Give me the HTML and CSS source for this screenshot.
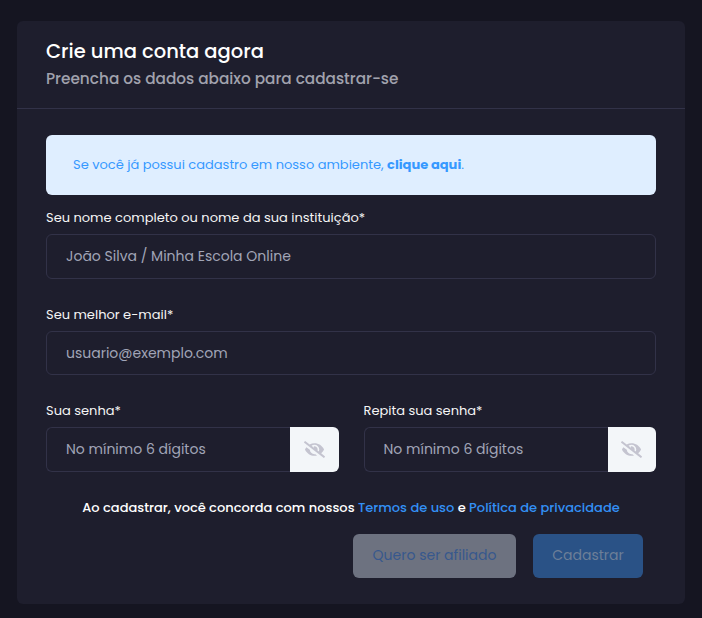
FILE: index.html
```html
<!DOCTYPE html>
<html lang="pt-BR">
<head>
<meta charset="utf-8">
<title>Crie uma conta agora</title>
<link rel="stylesheet" href="styles.css">
</head>
<body>
<main class="card">
  <header class="card-header">
    <h1 class="title">Crie uma conta agora</h1>
    <p class="subtitle">Preencha os dados abaixo para cadastrar-se</p>
  </header>
  <form class="card-body">
    <div class="alert">Se você já possui cadastro em nosso ambiente, <a class="alert-link">clique aqui</a>.</div>
    <div class="field field-name">
      <label class="label">Seu nome completo ou nome da sua instituição*</label>
      <input class="input" type="text" placeholder="João Silva / Minha Escola Online">
    </div>
    <div class="field field-mail">
      <label class="label">Seu melhor e-mail*</label>
      <input class="input input-mail" type="text" placeholder="usuario@exemplo.com">
    </div>
    <div class="row">
      <div class="field">
        <label class="label">Sua senha*</label>
        <div class="group">
          <input class="input input-joined" type="password" placeholder="No mínimo 6 dígitos">
          <span class="eye"><svg class="eye-icon" viewBox="0 0 640 512"><path d="M320 400c-75.85 0-137.25-58.71-142.9-133.11L72.2 185.82c-13.79 17.3-26.48 35.59-36.72 55.59a32.35 32.35 0 0 0 0 29.19C89.71 376.41 197.07 448 320 448c26.91 0 52.87-4 77.89-10.46L346 397.39a144.13 144.13 0 0 1-26 2.61zm313.82 58.1l-110.55-85.44a331.25 331.25 0 0 0 81.25-102.07 32.35 32.35 0 0 0 0-29.19C550.29 135.59 442.93 64 320 64a308.15 308.15 0 0 0-147.32 37.7L45.46 3.37A16 16 0 0 0 23 6.18L3.37 31.45A16 16 0 0 0 6.18 53.9l588.36 454.73a16 16 0 0 0 22.46-2.81l19.64-25.27a16 16 0 0 0-2.82-22.45zm-183.72-142l-39.3-30.38A94.75 94.75 0 0 0 416 256a94.76 94.76 0 0 0-121.31-92.21A47.65 47.65 0 0 1 304 192a46.64 46.64 0 0 1-1.54 10l-73.61-56.89A142.31 142.31 0 0 1 320 112a143.92 143.92 0 0 1 144 144c0 21.63-5.29 41.79-13.9 60.11z"/></svg></span>
        </div>
      </div>
      <div class="field">
        <label class="label">Repita sua senha*</label>
        <div class="group">
          <input class="input input-joined" type="password" placeholder="No mínimo 6 dígitos">
          <span class="eye"><svg class="eye-icon" viewBox="0 0 640 512"><path d="M320 400c-75.85 0-137.25-58.71-142.9-133.11L72.2 185.82c-13.79 17.3-26.48 35.59-36.72 55.59a32.35 32.35 0 0 0 0 29.19C89.71 376.41 197.07 448 320 448c26.91 0 52.87-4 77.89-10.46L346 397.39a144.13 144.13 0 0 1-26 2.61zm313.82 58.1l-110.55-85.44a331.25 331.25 0 0 0 81.25-102.07 32.35 32.35 0 0 0 0-29.19C550.29 135.59 442.93 64 320 64a308.15 308.15 0 0 0-147.32 37.7L45.46 3.37A16 16 0 0 0 23 6.18L3.37 31.45A16 16 0 0 0 6.18 53.9l588.36 454.73a16 16 0 0 0 22.46-2.81l19.64-25.27a16 16 0 0 0-2.82-22.45zm-183.72-142l-39.3-30.38A94.75 94.75 0 0 0 416 256a94.76 94.76 0 0 0-121.31-92.21A47.65 47.65 0 0 1 304 192a46.64 46.64 0 0 1-1.54 10l-73.61-56.89A142.31 142.31 0 0 1 320 112a143.92 143.92 0 0 1 144 144c0 21.63-5.29 41.79-13.9 60.11z"/></svg></span>
        </div>
      </div>
    </div>
    <p class="terms">Ao cadastrar, você concorda com nossos <a class="terms-link">Termos de uso</a> e <a class="terms-link">Política de privacidade</a></p>
    <div class="actions">
      <button type="button" class="btn btn-light">Quero ser afiliado</button>
      <button type="button" class="btn btn-primary">Cadastrar</button>
    </div>
  </form>
</main>
</body>
</html>
```

FILE: styles.css
```css
* { box-sizing: border-box; }
html, body { height: 100%; }
body {
  margin: 0;
  padding: 21px 17px 14px;
  background: #151521;
  font-family: "Poppins", "Inter", "Noto Sans", sans-serif;
  color: #fff;
}
.card {
  height: 583px;
  background: #1e1e2d;
  border-radius: 6px;
  display: flex;
  flex-direction: column;
}
.card-header {
  height: 88px;
  padding: 19px 29px 0;
  border-bottom: 1px solid #323248;
}
.title {
  margin: 0;
  font-size: 19.500px;
  line-height: 24px;
  font-weight: 500;
  color: #fff;
}
.subtitle {
  margin: 4px 0 0;
  font-size: 15.300px;
  line-height: 22px;
  font-weight: 500;
  color: #a1a2ad;
}
.card-body {
  padding: 26px 29px 0;
  display: flex;
  flex-direction: column;
}
.alert {
  height: 60px;
  padding: 0 27px;
  display: flex;
  align-items: center;
  white-space: pre-wrap;
  background: #dfeeff;
  border-radius: 6px;
  color: #3699ff;
  font-size: 13px;
}
.alert-link { font-weight: 700; }
.field { display: flex; flex-direction: column; flex: 1 1 0; min-width: 0; }
.field-name { margin-top: 13px; }
.field-mail { margin-top: 26px; }
.label {
  height: 26px;
  font-size: 13px;
  line-height: 20px;
  font-weight: 400;
  color: #f5f5f5;
}
.input {
  width: 100%;
  height: 45px;
  padding: 0 19px;
  background: #1e1e2d;
  border: 1px solid #323248;
  border-radius: 6px;
  color: #fff;
  font-family: inherit;
  font-size: 14px;
  outline: none;
}
.input::placeholder { color: #a1a5b7; opacity: 1; }
.input-mail { height: 44px; }
.row { display: flex; gap: 25px; margin-top: 26px; }
.group { display: flex; }
.input-joined {
  flex: 1;
  min-width: 0;
  border-right: 0;
  border-radius: 6px 0 0 6px;
}
.eye {
  flex: none;
  width: 48.400px;
  height: 45px;
  display: flex;
  align-items: center;
  justify-content: center;
  background: #f3f6f9;
  border-radius: 0 6px 6px 0;
}
.eye-icon { width: 21px; height: 17px; fill: #c4c4d0; }
.terms {
  margin: 26px 0 0;
  text-align: center;
  font-size: 13px;
  line-height: 20px;
  font-weight: 500;
  color: #fff;
}
.terms-link { color: #3390f5; }
.actions {
  display: flex;
  justify-content: flex-end;
  gap: 17px;
  margin-top: 16px;
  padding-right: 13px;
}
.btn {
  height: 44px;
  padding: 0 0 2px;
  border: 0;
  border-radius: 6px;
  font-family: inherit;
  font-size: 14px;
  font-weight: 400;
}
.btn-light { width: 163px; background: #6d7280; color: #37588d; }
.btn-primary { width: 110px; background: #2a5286; color: #6d7f98; }
```
